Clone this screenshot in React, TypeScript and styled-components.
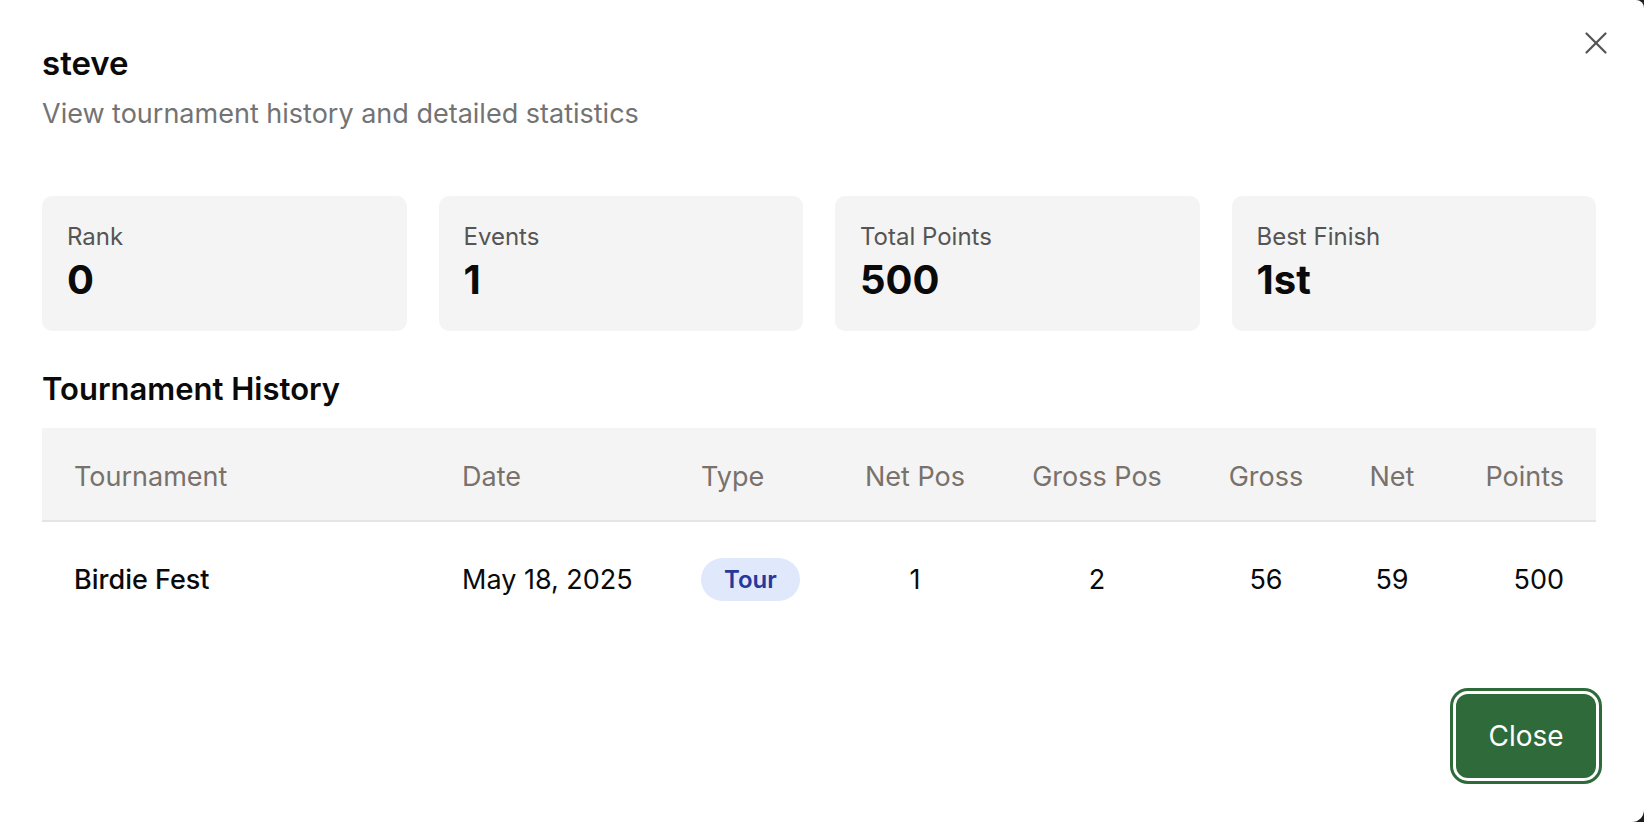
import React from 'react'
import styled, { createGlobalStyle } from 'styled-components'
import { X } from 'lucide-react'

const GlobalStyle = createGlobalStyle`
	html, body {
		margin: 0;
		padding: 0;
		background: #1c1c1c;
	}
	body {
		font-family: Inter, "Noto Sans", "Liberation Sans", sans-serif;
		-webkit-font-smoothing: antialiased;
	}
	* {
		box-sizing: border-box;
	}
`

const Dialog = styled.div`
	position: relative;
	display: flex;
	flex-direction: column;
	min-height: 100vh;
	background: #ffffff;
	border-radius: 0 8px 12px 0;
	padding: 45px 48px 44px 42px;
`

const CloseIcon = styled.button`
	position: absolute;
	top: 24px;
	right: 29px;
	display: flex;
	align-items: center;
	justify-content: center;
	padding: 0;
	border: none;
	background: transparent;
	color: #555555;
	cursor: pointer;
`

const Title = styled.h2`
	margin: 0;
	font-size: 33px;
	line-height: 36px;
	font-weight: 600;
	color: #0a0a0a;
`

const Subtitle = styled.p`
	margin: 17px 0 0;
	font-size: 27px;
	line-height: 32px;
	color: #737373;
`

const StatGrid = styled.div`
	display: grid;
	grid-template-columns: repeat(4, 1fr);
	gap: 32px;
	margin-top: 66px;
`

const StatCard = styled.div`
	display: flex;
	flex-direction: column;
	gap: 8px;
	padding: 26px 25px 31px;
	background: #f4f4f4;
	border-radius: 10px;
`

const StatLabel = styled.span`
	font-size: 24px;
	line-height: 30px;
	color: #555555;
`

const StatValue = styled.span`
	font-size: 40px;
	line-height: 40px;
	font-weight: 700;
	color: #0a0a0a;
`

const SectionTitle = styled.h3`
	margin: 40px 0 0;
	font-size: 31px;
	line-height: 36px;
	font-weight: 600;
	color: #0a0a0a;
`

const Table = styled.table`
	width: 100%;
	margin-top: 21px;
	border-collapse: collapse;
	table-layout: fixed;
`

type Align = 'left' | 'center' | 'right'

const HeadCell = styled.th<{ $align: Align; $w: number }>`
	width: ${({ $w }) => $w}px;
	padding: 35px 32px 29px;
	text-align: ${({ $align }) => $align};
	font-size: 27px;
	line-height: 28px;
	font-weight: 400;
	color: #78716c;
	background: #f4f4f4;
	border-bottom: 2px solid #e5e5e5;
	white-space: nowrap;
`

const BodyCell = styled.td<{ $align: Align; $strong?: boolean }>`
	padding: 36px 32px 34px;
	text-align: ${({ $align }) => $align};
	font-size: 27px;
	line-height: 30px;
	font-weight: ${({ $strong }) => ($strong ? 500 : 400)};
	color: #0a0a0a;
	white-space: nowrap;
	vertical-align: middle;
`

const Badge = styled.span`
	display: inline-flex;
	align-items: center;
	height: 43px;
	padding: 0 23px;
	border-radius: 999px;
	background: #dfe9fb;
	color: #27389c;
	font-size: 24px;
	font-weight: 600;
`

const Footer = styled.div`
	display: flex;
	justify-content: flex-end;
	margin-top: auto;
`

const PrimaryButton = styled.button`
	width: 140px;
	height: 84px;
	border: none;
	border-radius: 12px;
	background: #2f6b3a;
	color: #ffffff;
	font-family: inherit;
	font-size: 28px;
	font-weight: 400;
	box-shadow: 0 0 0 3px #ffffff, 0 0 0 6px #2f6b3a;
	cursor: pointer;
`

interface Column {
	label: string
	align: Align
	w: number
}

const columns: Column[] = [
	{ label: 'Tournament', align: 'left', w: 388 },
	{ label: 'Date', align: 'left', w: 239 },
	{ label: 'Type', align: 'left', w: 163 },
	{ label: 'Net Pos', align: 'center', w: 166 },
	{ label: 'Gross Pos', align: 'center', w: 198 },
	{ label: 'Gross', align: 'center', w: 140 },
	{ label: 'Net', align: 'center', w: 112 },
	{ label: 'Points', align: 'right', w: 148 },
]

const stats = [
	{ label: 'Rank', value: '0' },
	{ label: 'Events', value: '1' },
	{ label: 'Total Points', value: '500' },
	{ label: 'Best Finish', value: '1st' },
]

const history = [
	{ name: 'Birdie Fest', date: 'May 18, 2025', type: 'Tour', netPos: 1, grossPos: 2, gross: 56, net: 59, points: 500 },
]

const App = () => (
	<>
		<GlobalStyle />
		<Dialog>
			<CloseIcon aria-label='Close'>
				<X size={38} strokeWidth={1.4} />
			</CloseIcon>
			<Title>steve</Title>
			<Subtitle>View tournament history and detailed statistics</Subtitle>

			<StatGrid>
				{stats.map(s => (
					<StatCard key={s.label}>
						<StatLabel>{s.label}</StatLabel>
						<StatValue>{s.value}</StatValue>
					</StatCard>
				))}
			</StatGrid>

			<SectionTitle>Tournament History</SectionTitle>
			<Table>
				<thead>
					<tr>
						{columns.map(c => (
							<HeadCell key={c.label} $align={c.align} $w={c.w}>{c.label}</HeadCell>
						))}
					</tr>
				</thead>
				<tbody>
					{history.map(h => (
						<tr key={h.name}>
							<BodyCell $align='left' $strong>{h.name}</BodyCell>
							<BodyCell $align='left'>{h.date}</BodyCell>
							<BodyCell $align='left'><Badge>{h.type}</Badge></BodyCell>
							<BodyCell $align='center'>{h.netPos}</BodyCell>
							<BodyCell $align='center'>{h.grossPos}</BodyCell>
							<BodyCell $align='center'>{h.gross}</BodyCell>
							<BodyCell $align='center'>{h.net}</BodyCell>
							<BodyCell $align='right'>{h.points}</BodyCell>
						</tr>
					))}
				</tbody>
			</Table>

			<Footer>
				<PrimaryButton>Close</PrimaryButton>
			</Footer>
		</Dialog>
	</>
)

export default App
